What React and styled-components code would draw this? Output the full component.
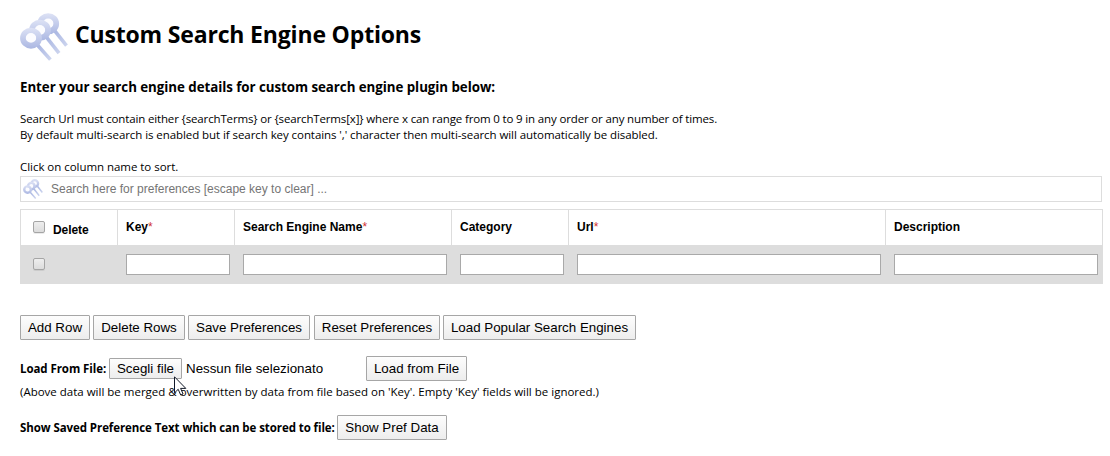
import React from "react";
import styled, { createGlobalStyle } from "styled-components";

const GlobalStyle = createGlobalStyle`
  * { box-sizing: border-box; }
  body {
    margin: 0;
    background: #fff;
    color: #000;
    font-family: "Open Sans", "Noto Sans", sans-serif;
    font-size: 11.5px;
    line-height: 16px;
  }
`;

const Page = styled.main`
  position: relative;
  width: 1110px;
  height: 456px;
  padding: 13px 0 0 20px;
  overflow: hidden;
  white-space: nowrap;
`;

const Header = styled.header`
  display: flex;
  align-items: flex-start;
  height: 65px;
  gap: 7px;
`;

const Title = styled.h1`
  margin: 5px 0 0;
  font-size: 23px;
  line-height: 32px;
  font-weight: 700;
  letter-spacing: ${(p) => p.$spacing}px;
`;

const Subtitle = styled.h2`
  margin: 0 0 15px;
  font-size: 13.333px;
  line-height: 18px;
  font-weight: 700;
  letter-spacing: ${(p) => p.$spacing}px;
`;

const Line = styled.p`
  margin: ${(p) => p.$top || 0}px 0 0;
  height: 16px;
  letter-spacing: ${(p) => p.$spacing}px;
`;

const SearchBox = styled.label`
  display: flex;
  align-items: center;
  gap: 8px;
  width: 1082px;
  height: 26px;
  margin-top: 1px;
  padding-left: 2px;
  border: 1px solid #ddd;
`;

const SearchInput = styled.input`
  flex: 1;
  height: 22px;
  padding: 0;
  border: 0;
  outline: 0;
  background: transparent;
  font: 12px/16px "Liberation Sans", sans-serif;
  &::placeholder { color: #757575; opacity: 1; }
`;

const columns = "97px 117px 217px 117px 317px 218px";

const Table = styled.div`
  width: 1083px;
  margin-top: 7px;
  font-family: "Liberation Sans", sans-serif;
  font-size: 12px;
`;

const HeadRow = styled.div`
  display: grid;
  grid-template-columns: ${columns};
  height: 36px;
  border-top: 1px solid #ddd;
  border-right: 1px solid #ddd;
`;

const HeadCell = styled.div`
  display: flex;
  align-items: flex-start;
  padding: ${(p) => (p.$check ? "11px 0 0 12px" : "9px 0 0 8px")};
  border-left: 1px solid #ddd;
  font-weight: 700;
`;

const CheckLabel = styled.span`
  margin: 1px 0 0 8px;
  letter-spacing: -0.08px;
`;

const Required = styled.span`
  color: #d03030;
  font-weight: 400;
`;

const BodyRow = styled.div`
  display: grid;
  grid-template-columns: ${columns};
  height: 39px;
  background: #ddd;
`;

const BodyCell = styled.div`
  padding: ${(p) => (p.$check ? "13px 0 0 13px" : "9px 4px 0 9px")};
  display: flex;
  align-items: flex-start;
`;

const Field = styled.input`
  width: ${(p) => p.$width}px;
  height: 21px;
  padding: 1px;
  border: 1px solid #a9a9a9;
  background: #fff;
  outline: 0;
`;

const Checkbox = styled.input.attrs({ type: "checkbox" })`
  appearance: none;
  flex: none;
  width: 12px;
  height: 12px;
  margin: 0;
  border: 1px solid #a5a5a5;
  border-radius: 2px;
  background: linear-gradient(#eee, #dcdcdc);
  box-shadow: 0 1px 0 rgba(0, 0, 0, 0.08);
`;

const Actions = styled.div`
  display: flex;
  gap: 3px;
  margin-top: 31px;
`;

const Button = styled.button`
  flex: none;
  width: ${(p) => p.$width}px;
  height: ${(p) => p.$height || 25}px;
  margin: 0 0 0 ${(p) => p.$left || 0}px;
  padding: 0;
  border: 1px solid #a6a6a6;
  border-radius: 1px;
  background: linear-gradient(#fdfdfd, #ededed);
  color: #000;
  font: 13.333px/16px "Liberation Sans", sans-serif;
`;

const FormRow = styled.div`
  display: flex;
  align-items: center;
  height: 25px;
  margin-top: ${(p) => p.$top}px;
`;

const Label = styled.strong`
  width: ${(p) => p.$width}px;
  font-weight: 700;
  letter-spacing: ${(p) => p.$spacing}px;
`;

const FileName = styled.span`
  width: 180px;
  margin-left: 4px;
  font: 13.333px/16px "Liberation Sans", sans-serif;
`;

const Pointer = styled.svg`
  position: absolute;
  left: 174px;
  top: 376px;
`;

const PinsIcon = ({ size }) => (
  <svg width={size} height={size} viewBox="0 0 48 48" style={{ flex: "none" }}>
    <defs>
      <linearGradient id="ring" x1="0" y1="0" x2="0" y2="1">
        <stop offset="0" stopColor="#dde2f5" />
        <stop offset="1" stopColor="#abb7e2" />
      </linearGradient>
      <linearGradient id="stem" x1="0" y1="0" x2="1" y2="1">
        <stop offset="0" stopColor="#a9b6e2" />
        <stop offset="1" stopColor="#ccd4ee" />
      </linearGradient>
    </defs>
    {[[28.2, 10.8], [20, 17.3], [11, 25.2]].map(([x, y], i) => (
      <g key={x}>
        <path
          d={`M${x + 6.4} ${y + 6.8}l${[11.9, 12.6, 13][i]} ${[15, 16, 14.6][i]}`}
          stroke="url(#stem)"
          strokeWidth="3.6"
        />
        <ellipse cx={x} cy={y - 0.3} rx="5.7" ry="5.4" fill="#fcfcff" />
        <path
          fillRule="evenodd"
          fill="url(#ring)"
          d={`M${x - 10.9} ${y}a10.9 10.5 0 1 0 21.8 0a10.9 10.5 0 1 0 -21.8 0zM${x - 5.2} ${y - 0.3}a5.2 4.9 0 1 0 10.4 0a5.2 4.9 0 1 0 -10.4 0z`}
        />
      </g>
    ))}
  </svg>
);

export default function App() {
  return (
    <>
      <GlobalStyle />
      <Page>
        <Header>
          <PinsIcon size={48} />
          <Title $spacing={-0.17}>Custom Search Engine Options</Title>
        </Header>
        <Subtitle $spacing={-0.05}>Enter your search engine details for custom search engine plugin below:</Subtitle>
        <Line $spacing={-0.15}>
          Search Url must contain either {"{searchTerms}"} or {"{searchTerms[x]}"} where x can range from 0 to 9 in any order or any number of times.
        </Line>
        <Line $spacing={-0.07}>By default multi-search is enabled but if search key contains ',' character then multi-search will automatically be disabled.</Line>
        <Line $top={16} $spacing={-0.04}>Click on column name to sort.</Line>
        <SearchBox>
          <PinsIcon size={20} />
          <SearchInput placeholder="Search here for preferences [escape key to clear] ..." />
        </SearchBox>
        <Table>
          <HeadRow>
            <HeadCell $check>
              <Checkbox />
              <CheckLabel>Delete</CheckLabel>
            </HeadCell>
            <HeadCell>Key<Required>*</Required></HeadCell>
            <HeadCell>Search Engine Name<Required>*</Required></HeadCell>
            <HeadCell>Category</HeadCell>
            <HeadCell>Url<Required>*</Required></HeadCell>
            <HeadCell>Description</HeadCell>
          </HeadRow>
          <BodyRow>
            <BodyCell $check><Checkbox /></BodyCell>
            {[104, 204, 104, 304, 204].map((w, i) => (
              <BodyCell key={i}><Field $width={w} /></BodyCell>
            ))}
          </BodyRow>
        </Table>
        <Actions>
          <Button $width={70}>Add Row</Button>
          <Button $width={92}>Delete Rows</Button>
          <Button $width={122}>Save Preferences</Button>
          <Button $width={126} $left={1}>Reset Preferences</Button>
          <Button $width={193}>Load Popular Search Engines</Button>
        </Actions>
        <FormRow $top={16}>
          <Label $width={89} $spacing={-0.07}>Load From File:</Label>
          <Button $width={73} $height={21}>Scegli file</Button>
          <FileName>Nessun file selezionato</FileName>
          <Button $width={101}>Load from File</Button>
        </FormRow>
        <Line $top={3} $spacing={0}>(Above data will be merged &amp; overwritten by data from file based on 'Key'. Empty 'Key' fields will be ignored.)</Line>
        <FormRow $top={15}>
          <Label $width={317} $spacing={-0.08}>Show Saved Preference Text which can be stored to file:</Label>
          <Button $width={110}>Show Pref Data</Button>
        </FormRow>
        <Pointer width="13" height="20" viewBox="0 0 13 20">
          <path d="M.5.8v16.1l3.7-3.6 2.5 5.7 2.4-1-2.5-5.6h5.2z" fill="#fff" stroke="#111827" strokeWidth="1" />
        </Pointer>
      </Page>
    </>
  );
}
